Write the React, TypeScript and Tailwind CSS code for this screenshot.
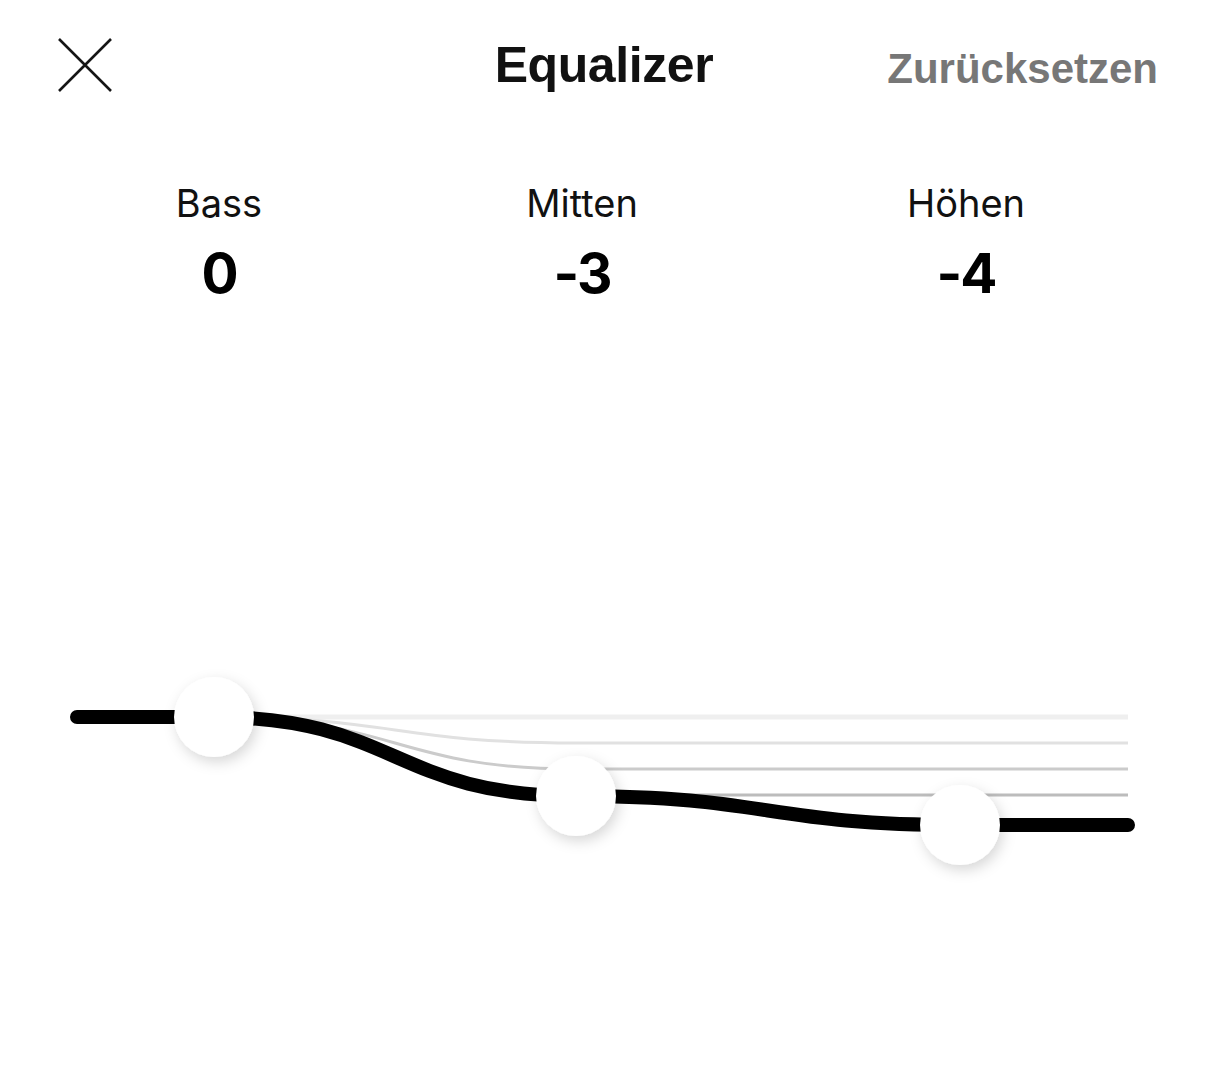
import React from 'react'

type Band = { name: string; value: number }

const BANDS: Band[] = [
  { name: 'Bass', value: 0 },
  { name: 'Mitten', value: -3 },
  { name: 'Höhen', value: -4 },
]

// knob centres inside the chart's own coordinate space
const KNOBS = [
  { x: 214, y: 116 },
  { x: 576, y: 195 },
  { x: 960, y: 224 },
]

// faint guide curves for the other mid levels
const GUIDES = [
  { y: 116, color: '#efefef', width: 5 },
  { y: 142, color: '#e1e1e1', width: 3 },
  { y: 168, color: '#cbcbcb', width: 3 },
  { y: 194, color: '#bcbcbc', width: 3 },
]

function CloseIcon() {
  return (
    <svg width="54" height="54" viewBox="0 0 54 54" fill="none">
      <path d="M1 1L53 53M53 1L1 53" stroke="#151515" strokeWidth="2.6" />
    </svg>
  )
}

function Curve() {
  const [a, b, c] = KNOBS
  const mid1 = (a.x + b.x) / 2
  const mid2 = (b.x + c.x) / 2
  const line = `M77 ${a.y} L${a.x} ${a.y} C${mid1} ${a.y} ${mid1} ${b.y} ${b.x} ${b.y} C${mid2} ${b.y} ${mid2} ${c.y} ${c.x} ${c.y} L1128 ${c.y}`

  return (
    <svg width="1206" height="300" viewBox="0 0 1206 300" className="block">
      <defs>
        <filter id="knob-shadow" x="-50%" y="-50%" width="200%" height="200%">
          <feDropShadow dx="3" dy="5" stdDeviation="7" floodColor="#000" floodOpacity="0.16" />
        </filter>
      </defs>
      {GUIDES.map(g => (
        <path
          key={g.y}
          d={`M${a.x} ${a.y} C${mid1} ${a.y} ${mid1} ${g.y} ${b.x} ${g.y} L1128 ${g.y}`}
          stroke={g.color}
          strokeWidth={g.width}
          fill="none"
        />
      ))}
      <path d={line} stroke="#000" strokeWidth="14" strokeLinecap="round" fill="none" />
      {KNOBS.map(k => (
        <circle key={k.x} cx={k.x} cy={k.y} r="40" fill="#fff" filter="url(#knob-shadow)" />
      ))}
    </svg>
  )
}

export default function App() {
  return (
    <div className="min-h-screen bg-white text-[#111] font-['Liberation_Sans',Arial,sans-serif]">
      {/* Top bar */}
      <header className="grid grid-cols-[1fr_auto_1fr] items-center pl-[50px] pr-[48px] pt-[38px]">
        <button className="ml-2 w-[54px] h-[54px] justify-self-start">
          <CloseIcon />
        </button>
        <h1 className="text-[50px] leading-[50px] font-bold tracking-[-0.4px]">Equalizer</h1>
        <button className="justify-self-end pt-[7px] text-[42px] leading-[42px] font-bold text-[#777]">
          Zurücksetzen
        </button>
      </header>

      {/* Band labels and values */}
      <div className="grid grid-cols-[300px_426px_342px] pl-[69px] mt-[92px] font-['Inter',sans-serif]">
        {BANDS.map(b => (
          <div key={b.name} className="flex flex-col items-center">
            <span className="text-[38px] leading-[38px] font-normal">{b.name}</span>
            <span className="mt-[24px] text-[55px] leading-[55px] font-bold tracking-[-2px] text-black">{b.value}</span>
          </div>
        ))}
      </div>

      <div className="mt-[300px]">
        <Curve />
      </div>
    </div>
  )
}
